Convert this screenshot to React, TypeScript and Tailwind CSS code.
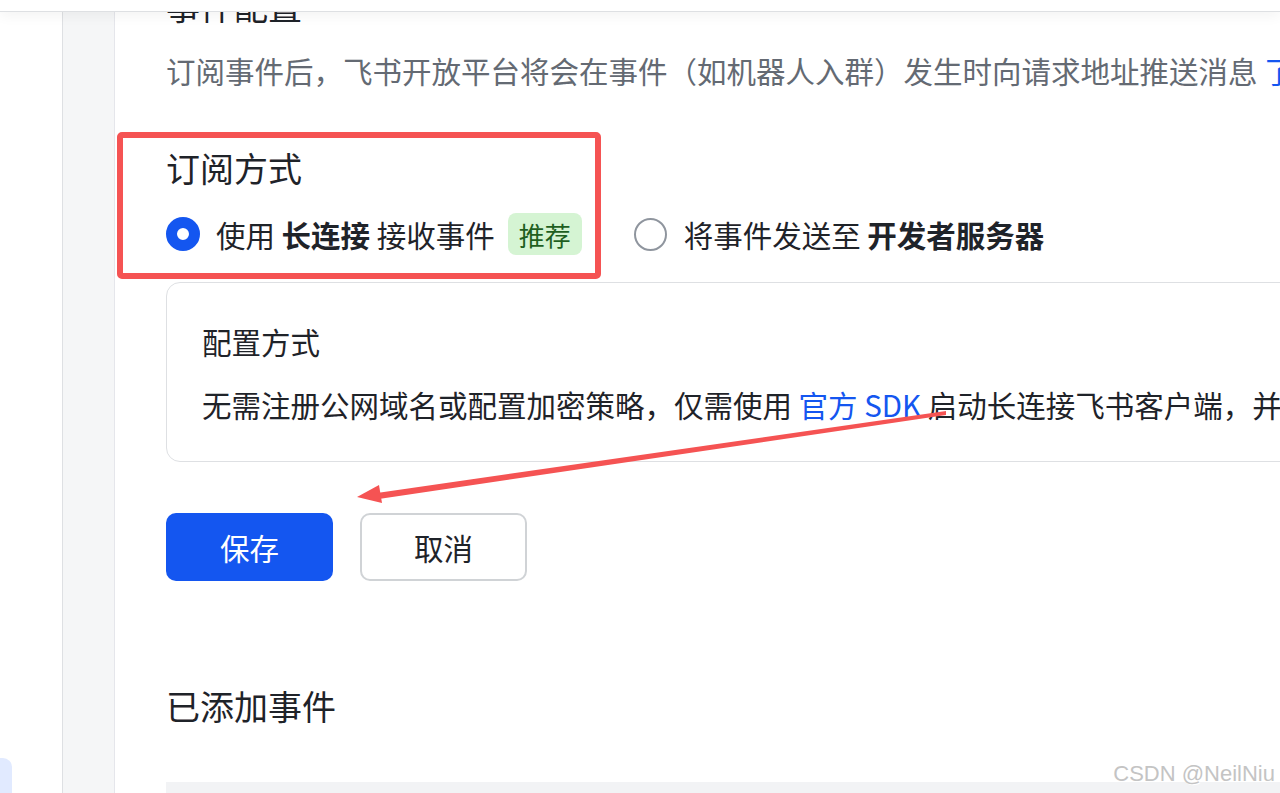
const font = "font-['Noto_Sans_CJK_SC','Noto_Sans',sans-serif]"

function Radio({ checked }: { checked?: boolean }) {
  return checked ? (
    <span className="block h-[34px] w-[34px] shrink-0 rounded-full border-[11px] border-[#1456f0] bg-white" />
  ) : (
    <span className="block h-[33px] w-[33px] shrink-0 rounded-full border-2 border-[#8f959e] bg-white" />
  )
}

export default function App() {
  return (
    <div className={`relative flex h-[793px] w-[1280px] flex-col overflow-hidden bg-white text-[#1f2329] ${font}`}>
      <div className="relative z-10 h-[12px] shrink-0 border-b border-[#dee0e3] bg-white shadow-[0_3px_14px_rgba(0,0,0,0.06)]" />

      <div className="flex min-h-0 flex-1">
        <aside className="flex w-[63px] shrink-0 flex-col justify-end border-r border-[#dee0e3] bg-white">
          <div className="mb-[-4px] h-[39px] w-[12px] rounded-tr-[9px] bg-[#e1eaff]" />
        </aside>
        <div className="w-[52px] shrink-0 border-r border-[#e5e6eb] bg-[#f5f6f7]" />

        <main className="min-w-0 flex-1 overflow-hidden pl-[51px]">
          <h2 className="-mt-[28px] whitespace-nowrap text-[34px] leading-[44px]">事件配置</h2>
          <p className="mt-[22px] whitespace-nowrap text-[29.5px] leading-[40px] text-[#646a73]">
            订阅事件后，飞书开放平台将会在事件（如机器人入群）发生时向请求地址推送消息{' '}
            <span className="text-[#1456f0]">了解更多</span>
          </p>

          <h3 className="mt-[56px] whitespace-nowrap text-[34px] leading-[44px]">订阅方式</h3>
          <div className="mt-[23px] flex h-[42px] items-center whitespace-nowrap text-[29.5px]">
            <Radio checked />
            <span className="ml-[16px]">
              使用 <b className="font-bold">长连接</b> 接收事件
            </span>
            <span className="ml-[13px] flex h-[42px] items-center rounded-[8px] bg-[#d5f4d3] px-[11px] text-[26px] text-[#1f5f1f]">
              推荐
            </span>
            <span className="ml-[52px]">
              <Radio />
            </span>
            <span className="ml-[17px]">
              将事件发送至 <b className="font-bold">开发者服务器</b>
            </span>
          </div>

          <div className="mt-[27px] h-[180px] w-[1200px] rounded-[14px] border border-[#dee0e3] pl-[35px] pt-[37px] text-[29.5px]">
            <div className="leading-[42px]">配置方式</div>
            <div className="mt-[21px] whitespace-nowrap leading-[42px]">
              无需注册公网域名或配置加密策略，仅需使用 <span className="text-[#1456f0]">官方 SDK</span>{' '}
              启动长连接飞书客户端，并在开发者后台完成配置
            </div>
          </div>

          <div className="mt-[51px] flex gap-[27px] text-[29.5px]">
            <button className="h-[68px] w-[167px] rounded-[10px] bg-[#1456f0] text-white">保存</button>
            <button className="h-[68px] w-[167px] rounded-[10px] border-2 border-[#d0d3d6] bg-white">
              取消
            </button>
          </div>

          <h3 className="mt-[103px] whitespace-nowrap text-[34px] leading-[44px]">已添加事件</h3>
          <div className="mt-[54px] h-[60px] w-full bg-[#f2f3f5]" />
        </main>
      </div>

      {/* annotation overlays */}
      <div className="pointer-events-none absolute left-[117px] top-[132px] h-[147px] w-[484px] rounded-[5px] border-[6px] border-[#f55353]" />
      <svg className="pointer-events-none absolute left-0 top-0" width="1280" height="793">
        <polygon points="946,411 946,415 372,500 370,494" fill="#f55353" />
        <polygon points="357,497 379,485 382,503" fill="#f55353" />
      </svg>

      <div className="pointer-events-none absolute right-[5px] top-[757px] font-['Liberation_Sans',Arial,sans-serif] text-[22px] text-[#c4c4c4] [text-shadow:0_0_1px_#fff,1px_1px_0_#fff]">
        CSDN @NeilNiu
      </div>
    </div>
  )
}
